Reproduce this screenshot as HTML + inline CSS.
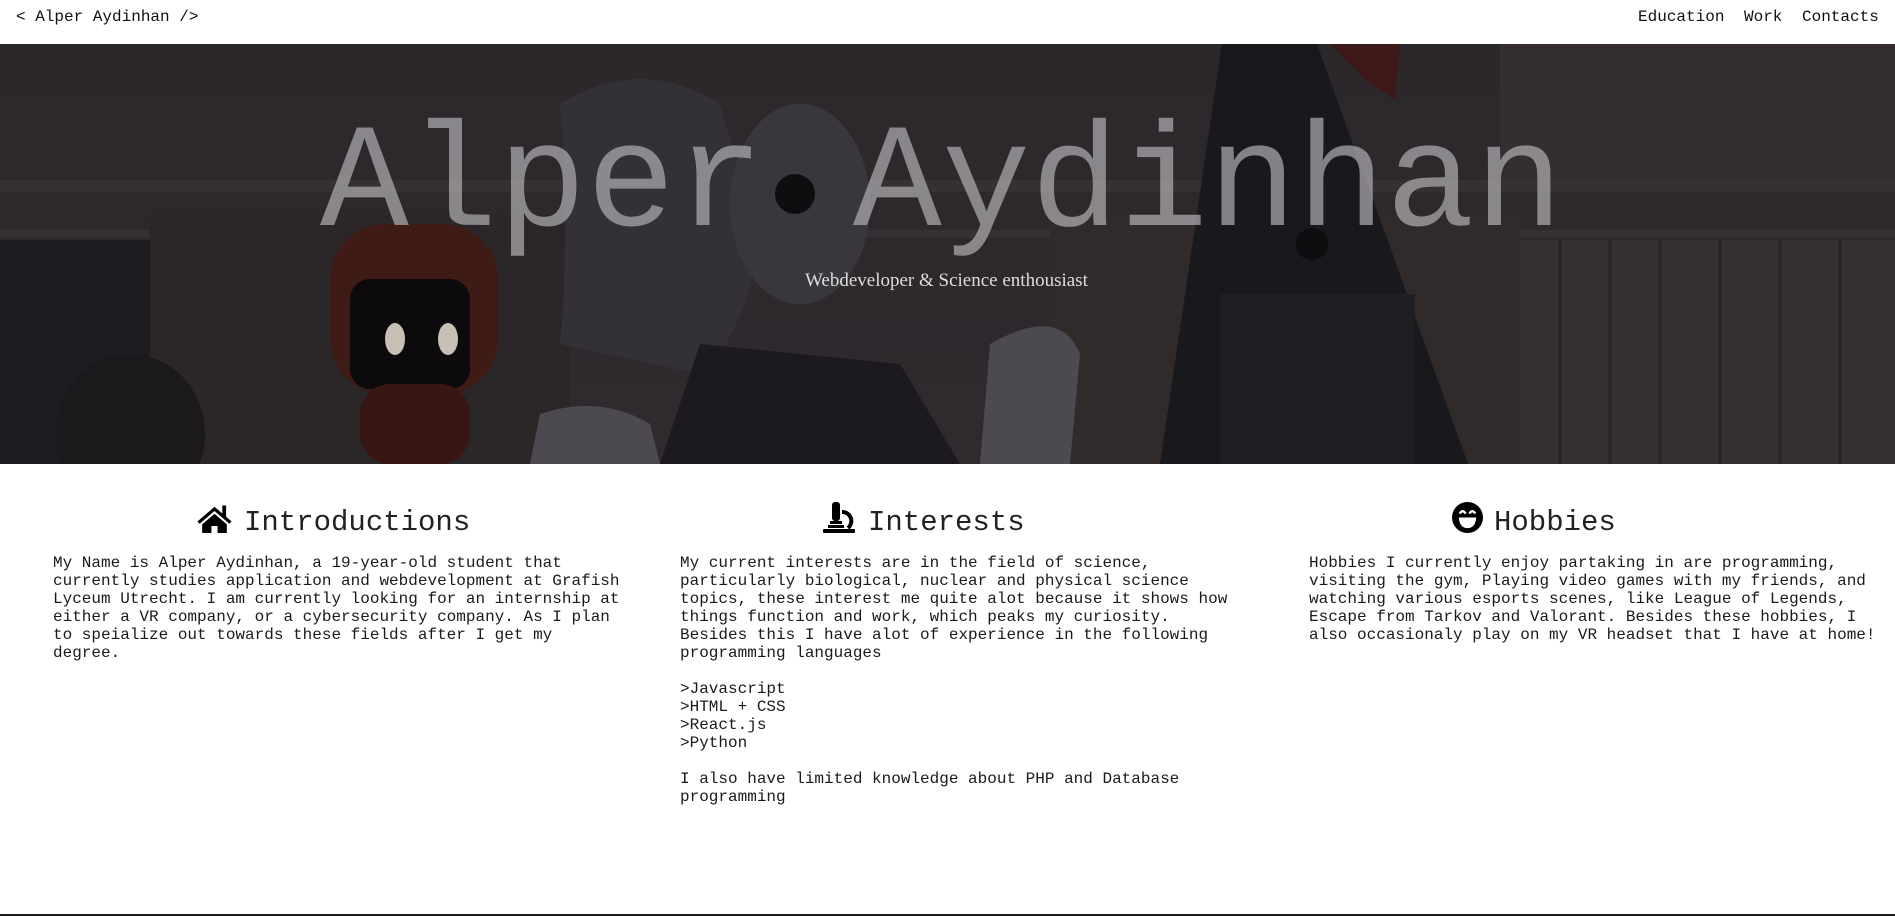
<!DOCTYPE html>
<html><head><meta charset="utf-8"><style>
*{margin:0;padding:0;box-sizing:border-box}
body{width:1895px;height:916px;position:relative;background:#fff;overflow:hidden;font-family:"Liberation Mono","Courier New",monospace;color:#111}
.a{position:absolute;white-space:nowrap}
.nav{font-size:16px;top:8px}
#hero{position:absolute;left:0;top:44px;width:1895px;height:420px;overflow:hidden;background:#2a2628}
.h2{font-size:29px;top:507px;line-height:32px;color:#222}
.p{font-size:16px;line-height:18px;white-space:pre;position:absolute;top:554px;color:#1a1a1a}
</style></head><body>
<div class="a nav" style="left:16px">&lt; Alper Aydinhan /&gt;</div>
<div class="a nav" style="left:1638px">Education</div>
<div class="a nav" style="left:1744px">Work</div>
<div class="a nav" style="left:1802px">Contacts</div>

<div id="hero">
<svg width="1895" height="420" style="position:absolute;left:0;top:0">
<defs>
<linearGradient id="w" x1="0" y1="0" x2="0" y2="1"><stop offset="0" stop-color="#2b272a"/><stop offset="1" stop-color="#302a2f"/></linearGradient>
</defs>
<rect width="1895" height="420" fill="url(#w)"/>
<rect x="1500" y="0" width="395" height="140" fill="#342e32"/>
<rect x="0" y="136" width="1895" height="12" fill="#363035"/>
<rect x="0" y="186" width="1895" height="8" fill="#363035"/>
<rect x="0" y="196" width="150" height="224" fill="#1f1c21"/>
<rect x="1520" y="196" width="375" height="224" fill="#352e33"/>
<g stroke="#2a2428" stroke-width="3"><line x1="1560" y1="196" x2="1560" y2="420"/><line x1="1610" y1="196" x2="1610" y2="420"/><line x1="1660" y1="196" x2="1660" y2="420"/><line x1="1720" y1="196" x2="1720" y2="420"/><line x1="1780" y1="196" x2="1780" y2="420"/><line x1="1840" y1="196" x2="1840" y2="420"/></g>
<rect x="150" y="170" width="420" height="250" fill="#2b2628"/>
<rect x="1050" y="170" width="470" height="250" fill="#302a2a"/>
<ellipse cx="130" cy="390" rx="75" ry="80" fill="#1c191c"/>
<rect x="330" y="180" width="168" height="170" rx="55" fill="#3e1b15"/>
<rect x="350" y="235" width="120" height="110" rx="20" fill="#0c0a0c"/>
<ellipse cx="395" cy="295" rx="10" ry="16" fill="#c8c0b4"/>
<ellipse cx="448" cy="295" rx="10" ry="16" fill="#c8c0b4"/>
<rect x="360" y="340" width="110" height="80" rx="30" fill="#381712"/>
<path d="M560 60 Q640 10 720 60 L760 200 Q740 300 700 330 L560 300 Q570 200 560 60Z" fill="#333136"/>
<ellipse cx="800" cy="160" rx="70" ry="100" fill="#39373c"/>
<circle cx="795" cy="150" r="20" fill="#0e0e10"/>
<path d="M540 370 Q600 350 650 380 L660 420 L530 420Z" fill="#4c4a50"/>
<path d="M990 300 Q1060 260 1080 310 L1070 420 L980 420Z" fill="#4c4a50"/>
<path d="M700 300 L900 320 L960 420 L660 420Z" fill="#1c1a1f"/>
<path d="M1222 0 L1317 0 L1468 420 L1160 420Z" fill="#19181c"/>
<rect x="1220" y="250" width="195" height="170" fill="#1f1e23"/>
<circle cx="1312" cy="200" r="16" fill="#0d0d10"/>
<path d="M1330 0 L1400 0 L1395 55 L1370 40Z" fill="#3e1818"/>
</svg>
<div class="a" style="left:320px;top:58px;font-size:148px;line-height:170px;color:#aeacb0;opacity:.72">Alper Aydinhan</div>
<div class="a" style="left:805px;top:226px;font-family:'Liberation Serif',serif;font-size:19px;color:#ddd">Webdeveloper &amp; Science enthousiast</div>
</div>

<svg class="a" style="left:196px;top:503px" width="37" height="30" viewBox="0 0 576 470"><path fill="#000" d="M288 60 L20 290 L55 325 L288 125 L521 325 L556 290 L470 216 V40 H410 V164Z"/><path fill="#000" d="M288 170 L95 335 V470 H240 V360 H336 V470 H481 V335Z"/></svg>
<div class="a h2" style="left:244px">Introductions</div>

<svg class="a" style="left:823px;top:502px" width="32" height="31" viewBox="0 0 32 31"><rect x="9" y="0" width="8" height="19" rx="3" fill="#000"/><rect x="7" y="19" width="12" height="3" fill="#000"/><path d="M19 10 A9 9 0 0 1 25 26" stroke="#000" stroke-width="4" fill="none"/><rect x="0" y="27" width="32" height="4" rx="1" fill="#000"/><rect x="5" y="23" width="16" height="3" fill="#000"/></svg>
<div class="a h2" style="left:868px">Interests</div>

<svg class="a" style="left:1452px;top:502px" width="31" height="31" viewBox="0 0 32 32"><circle cx="16" cy="16" r="16" fill="#000"/><path d="M7 16 H25 Q24 27 16 27 Q8 27 7 16Z" fill="#fff"/><path d="M8 12 Q11 7 14 12" stroke="#fff" stroke-width="2.5" fill="none"/><path d="M18 12 Q21 7 24 12" stroke="#fff" stroke-width="2.5" fill="none"/></svg>
<div class="a h2" style="left:1494px">Hobbies</div>

<div class="p" style="left:53px">My Name is Alper Aydinhan, a 19-year-old student that
currently studies application and webdevelopment at Grafish
Lyceum Utrecht. I am currently looking for an internship at
either a VR company, or a cybersecurity company. As I plan
to speialize out towards these fields after I get my
degree.</div>
<div class="p" style="left:680px">My current interests are in the field of science,
particularly biological, nuclear and physical science
topics, these interest me quite alot because it shows how
things function and work, which peaks my curiosity.
Besides this I have alot of experience in the following
programming languages

&gt;Javascript
&gt;HTML + CSS
&gt;React.js
&gt;Python

I also have limited knowledge about PHP and Database
programming</div>
<div class="p" style="left:1309px">Hobbies I currently enjoy partaking in are programming,
visiting the gym, Playing video games with my friends, and
watching various esports scenes, like League of Legends,
Escape from Tarkov and Valorant. Besides these hobbies, I
also occasionaly play on my VR headset that I have at home!</div>
<div style="position:absolute;left:0;top:914px;width:1895px;height:2px;background:#1e1e1e"></div>
</body></html>
